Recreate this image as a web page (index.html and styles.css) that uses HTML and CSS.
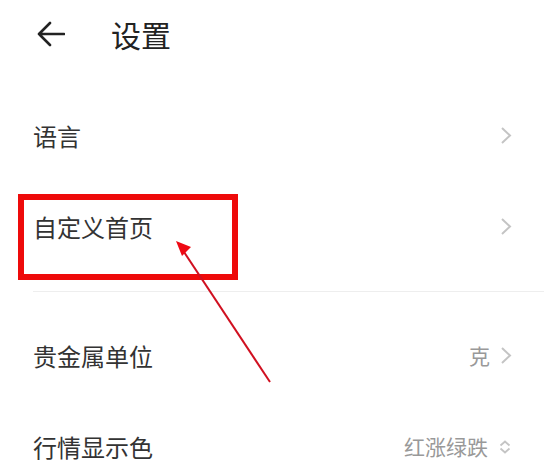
FILE: index.html
```html
<!DOCTYPE html>
<html lang="zh-CN">
<head>
	<meta charset="UTF-8">
	<title>设置</title>
	<link rel="stylesheet" href="styles.css">
</head>
<body>
	<header class="top-bar">
		<svg class="back" width="28" height="26" viewBox="0 0 28 26">
			<path d="M13 2 L2 13 L13 24 M2 13 H27" fill="none" stroke="#222" stroke-width="2.6" stroke-linecap="round" stroke-linejoin="round"/>
		</svg>
		<h1 class="title">设置</h1>
	</header>
	<ul class="list">
		<li class="row">
			<span class="label">语言</span>
			<svg class="chevron" width="12" height="19" viewBox="0 0 12 19"><path d="M2 2 L10 9.5 L2 17" fill="none" stroke="#c4c4c4" stroke-width="2"/></svg>
		</li>
		<li class="row">
			<span class="label">自定义首页</span>
			<svg class="chevron" width="12" height="19" viewBox="0 0 12 19"><path d="M2 2 L10 9.5 L2 17" fill="none" stroke="#c4c4c4" stroke-width="2"/></svg>
		</li>
	</ul>
	<div class="divider"></div>
	<ul class="list">
		<li class="row">
			<span class="label">贵金属单位</span>
			<span class="value">克</span>
			<svg class="chevron" width="12" height="19" viewBox="0 0 12 19"><path d="M2 2 L10 9.5 L2 17" fill="none" stroke="#c4c4c4" stroke-width="2"/></svg>
		</li>
		<li class="row">
			<span class="label">行情显示色</span>
			<span class="value">红涨绿跌</span>
			<svg class="updown" width="14" height="14" viewBox="0 0 14 14"><path d="M2.5 5.5 L7 1.5 L11.5 5.5 M2.5 8.5 L7 12.5 L11.5 8.5" fill="none" stroke="#c4c4c4" stroke-width="1.8"/></svg>
		</li>
	</ul>
	<!-- 标注：红框和箭头 -->
	<svg class="mark" width="544" height="460" viewBox="0 0 544 460">
		<rect x="21" y="197" width="214" height="80" fill="none" stroke="#ee0a0a" stroke-width="6"/>
		<line x1="270" y1="382" x2="184" y2="252" stroke="#d01020" stroke-width="2"/>
		<polygon points="176,241 191,247 182,256" fill="#ee0a14"/>
	</svg>
</body>
</html>
```
FILE: styles.css
```css
*{
	box-sizing:border-box;
	margin:0;
	padding:0;
}
body{
	position:relative;
	width:544px;
	height:460px;
	overflow:hidden;
	background:#fff;
	font-family:"Noto Sans CJK SC","Noto Sans",sans-serif;
	color:#333;
}
.top-bar{
	display:flex;
	align-items:center;
	height:68px;
	padding-left:37px;
}
.title{
	margin-left:46px;
	font-size:30px;
	font-weight:normal;
	line-height:1;
	color:#222;
}
.list{
	list-style:none;
}
.list:first-of-type{
	margin-top:22px;
}
.row{
	display:flex;
	align-items:center;
	height:91px;
	padding:0 32px 0 33px;
}
.label{
	flex:1;
	font-size:24px;
	line-height:1;
	color:#333;
}
.value{
	margin-right:10px;
	font-size:21px;
	line-height:1;
	color:#999;
}
.chevron,.updown{
	display:block;
}
.divider{
	height:1px;
	margin:19px 0 18px 33px;
	background:#eee;
}
.mark{
	position:absolute;
	left:0;
	top:0;
	pointer-events:none;
}
```
